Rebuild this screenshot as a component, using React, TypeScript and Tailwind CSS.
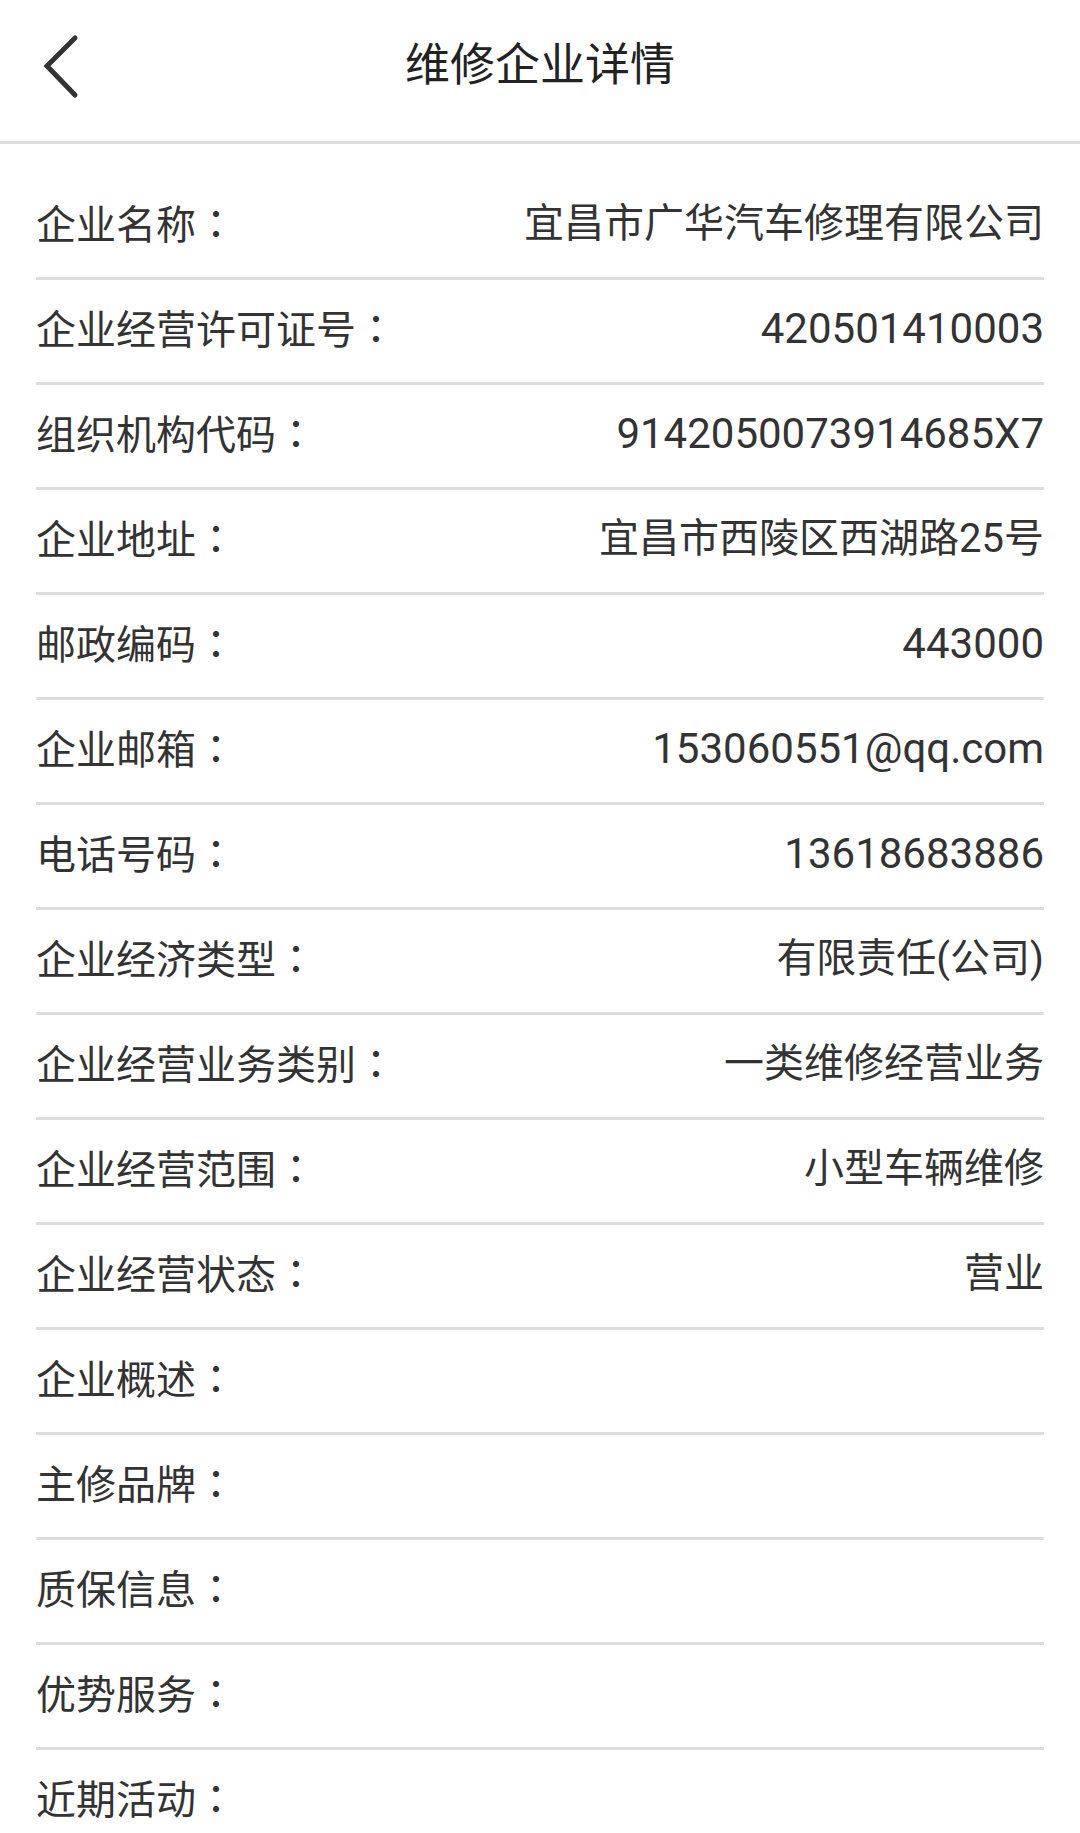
import React from "react";

const rows: [string, string][] = [
  ["企业名称", "宜昌市广华汽车修理有限公司"],
  ["企业经营许可证号", "420501410003"],
  ["组织机构代码", "9142050073914685X7"],
  ["企业地址", "宜昌市西陵区西湖路25号"],
  ["邮政编码", "443000"],
  ["企业邮箱", "153060551@qq.com"],
  ["电话号码", "13618683886"],
  ["企业经济类型", "有限责任(公司)"],
  ["企业经营业务类别", "一类维修经营业务"],
  ["企业经营范围", "小型车辆维修"],
  ["企业经营状态", "营业"],
  ["企业概述", ""],
  ["主修品牌", ""],
  ["质保信息", ""],
  ["优势服务", ""],
  ["近期活动", ""],
];

export default function App() {
  return (
    <div
      className="w-[1080px] min-h-[1833px] bg-white text-[#333]"
      style={{ fontFamily: '"Roboto", "Noto Sans CJK SC", sans-serif' }}
    >
      {/* header */}
      <header className="h-[144px] border-b-[3px] border-[#dddddd] grid grid-cols-[1fr_auto_1fr] items-center">
        <div className="pl-[40px] pb-[4px]">
          <svg width="44" height="70" viewBox="0 0 44 70">
            <polyline
              points="35,4 7,32 35,61"
              fill="none"
              stroke="#333"
              strokeWidth="5"
              strokeLinecap="round"
              strokeLinejoin="miter"
            />
          </svg>
        </div>
        <h1 className="text-[45px] leading-none text-[#222] pb-[11px] font-normal">维修企业详情</h1>
        <div />
      </header>

      {/* details */}
      <div className="mt-[31px] px-[36px]">
        {rows.map(([label, value], i) => {
          const latin = /^[\x00-\x7f]+$/.test(value);
          return (
            <div
              key={i}
              className="h-[105px] border-b-[3px] border-[#dddddd] flex items-center justify-between pb-[4px] text-[40px] leading-none"
            >
              <span className="whitespace-nowrap">
                {label}
                <span className="font-['Noto_Sans_CJK_TC',sans-serif]">：</span>
              </span>
              <span className={latin ? "whitespace-nowrap text-[42px]" : "whitespace-nowrap"}>{value}</span>
            </div>
          );
        })}
      </div>
    </div>
  );
}
